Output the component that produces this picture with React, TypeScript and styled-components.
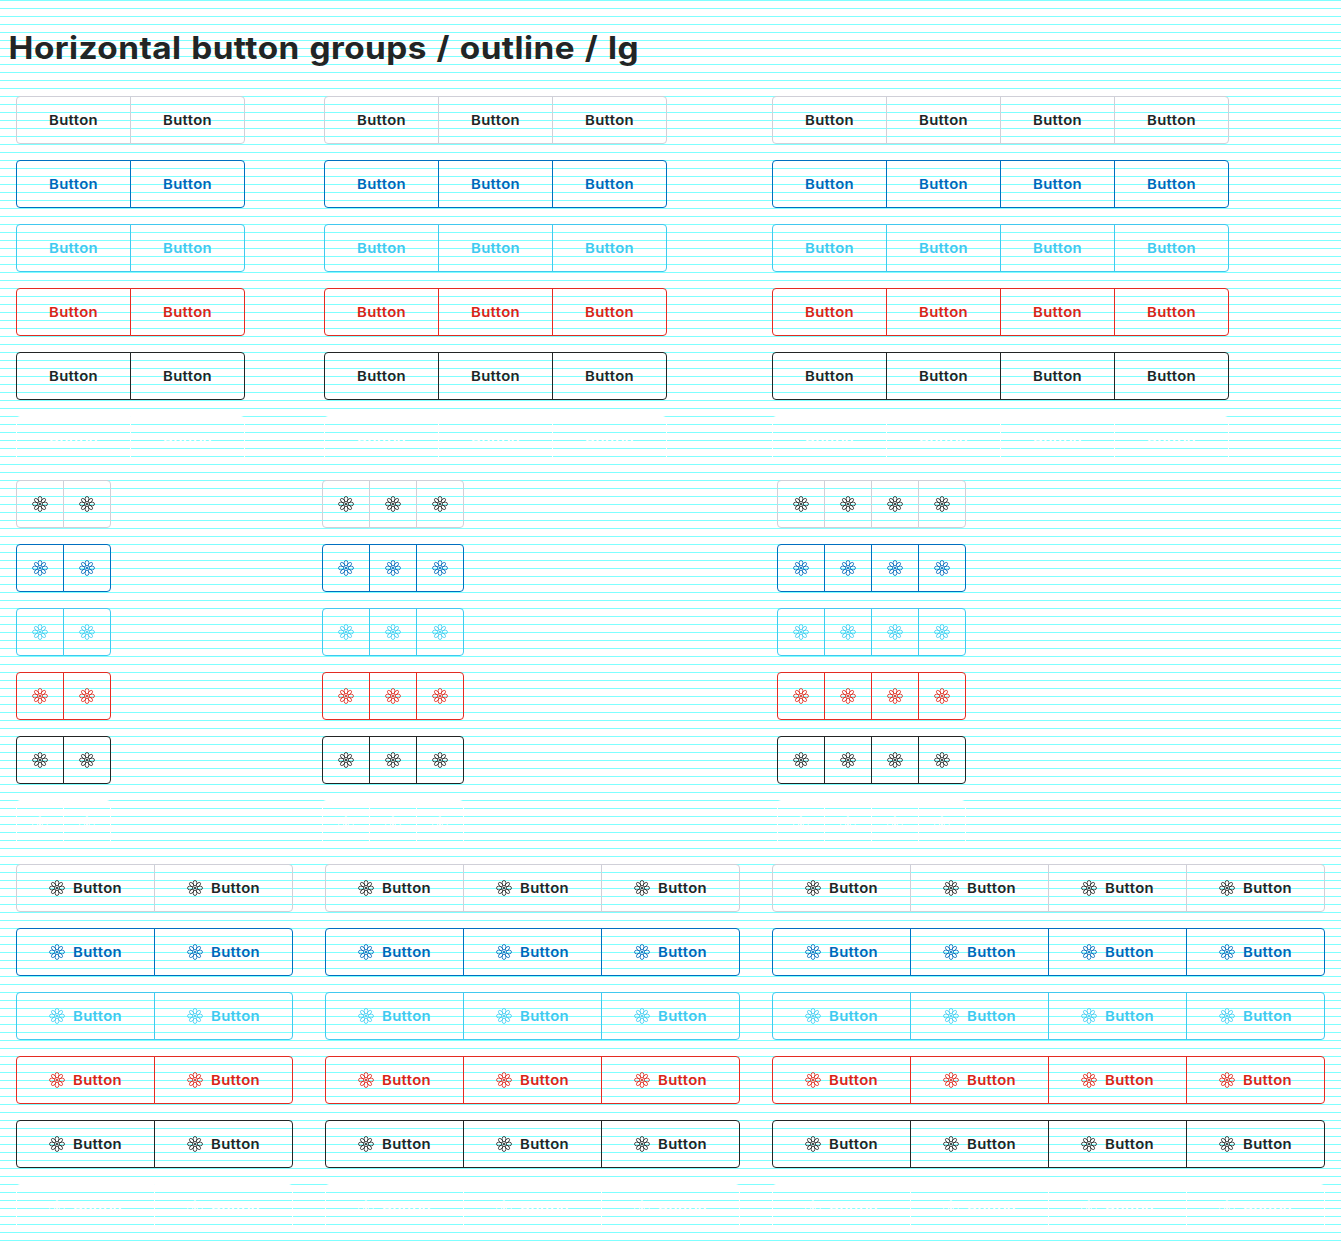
import React from "react";
import styled, { createGlobalStyle } from "styled-components";

const Global = createGlobalStyle`
  html { background: #fff; }
  body {
    margin: 0;
    min-height: 1248px;
    font-family: Inter, "Liberation Sans", sans-serif;
    color: #222525;
    background: repeating-linear-gradient(to bottom, #7fffff 0, #7fffff 1px, #fff 1px, #fff 8px);
  }
`;

const Page = styled.main`
  width: 1341px;
  height: 1248px;
  box-sizing: border-box;
  overflow: hidden;
`;

const Title = styled.h1`
  margin: 0;
  padding: 24px 8px 0;
  height: 72px;
  box-sizing: content-box;
  font-size: 31px;
  line-height: 48px;
  font-weight: 700;
  letter-spacing: 0.4px;
  word-spacing: 1.4px;
  white-space: nowrap;
  transform: scaleX(1.075);
  transform-origin: 0 50%;
`;

const Section = styled.section<{ $columns: string }>`
  display: grid;
  grid-template-columns: ${(p) => p.$columns};
  row-gap: 16px;
  padding: 0 0 16px 16px;
`;

const Group = styled.div<{ $border: string; $color: string }>`
  display: flex;
  color: ${(p) => p.$color};
  --edge: ${(p) => p.$border};
`;

const Button = styled.button<{ $width: number }>`
  flex: none;
  display: flex;
  align-items: center;
  justify-content: center;
  gap: 8px;
  box-sizing: border-box;
  width: ${(p) => p.$width}px;
  height: 48px;
  margin: 0;
  padding: 0;
  border: 1px solid var(--edge);
  background: transparent;
  color: inherit;
  font: 600 13.5px/24px Inter, "Liberation Sans", sans-serif;
  letter-spacing: 0.3px;
  & + & { margin-left: -1px; }
  &:first-child { border-radius: 4px 0 0 4px; }
  &:last-child { border-radius: 0 4px 4px 0; }
`;

const Label = styled.span`
  width: 49px;
  text-align: center;
  white-space: nowrap;
  transform: scaleX(1.1);
`;

const Icon = styled.svg`
  flex: none;
  width: 16px;
  height: 16px;
`;

const Atom = () => (
  <Icon viewBox="0 0 16 16" fill="none" stroke="currentColor" strokeWidth="0.8">
    {[0, 90, 180, 270].map((angle) => (
      <path
        key={angle}
        d="M7 6C5.7 3.6 5.8 0.5 8 0.5S10.3 3.6 9 6"
        transform={`rotate(${angle} 8 8)`}
      />
    ))}
    {[45, 135, 225, 315].map((angle) => (
      <path
        key={angle}
        d="M6.8 5.6C6 3.2 6.5 0.6 8 0.6S10 3.2 9.2 5.6"
        transform={`rotate(${angle} 8 8)`}
      />
    ))}
    <circle cx="8" cy="8" r="2.4" />
    <circle cx="8" cy="8" r="1.1" fill="currentColor" stroke="none" />
  </Icon>
);

const tones = [
  { name: "default", border: "#cfd0d8", color: "#222525" },
  { name: "primary", border: "#0070c0", color: "#0067b9" },
  { name: "info", border: "#41c9ef", color: "#41c9ef" },
  { name: "danger", border: "#e42b22", color: "#d92518" },
  { name: "dark", border: "#222525", color: "#222525" },
  { name: "white", border: "#fff", color: "#fff" },
];

const sections = [
  { id: "text", columns: "308px 448px auto", width: 115, icon: false, text: true },
  { id: "icon", columns: "306px 455px auto", width: 48, icon: true, text: false },
  { id: "both", columns: "309px 447px auto", width: 139, icon: true, text: true },
];

export default function App() {
  return (
    <>
      <Global />
      <Page>
        <Title>Horizontal button groups / outline / lg</Title>
        {sections.map((section) => (
          <Section key={section.id} $columns={section.columns}>
            {tones.flatMap((tone) =>
              [2, 3, 4].map((count) => (
                <Group key={`${tone.name}-${count}`} $border={tone.border} $color={tone.color}>
                  {Array.from({ length: count }, (_, i) => (
                    <Button key={i} $width={section.width}>
                      {section.icon && <Atom />}
                      {section.text && <Label>Button</Label>}
                    </Button>
                  ))}
                </Group>
              ))
            )}
          </Section>
        ))}
      </Page>
    </>
  );
}
